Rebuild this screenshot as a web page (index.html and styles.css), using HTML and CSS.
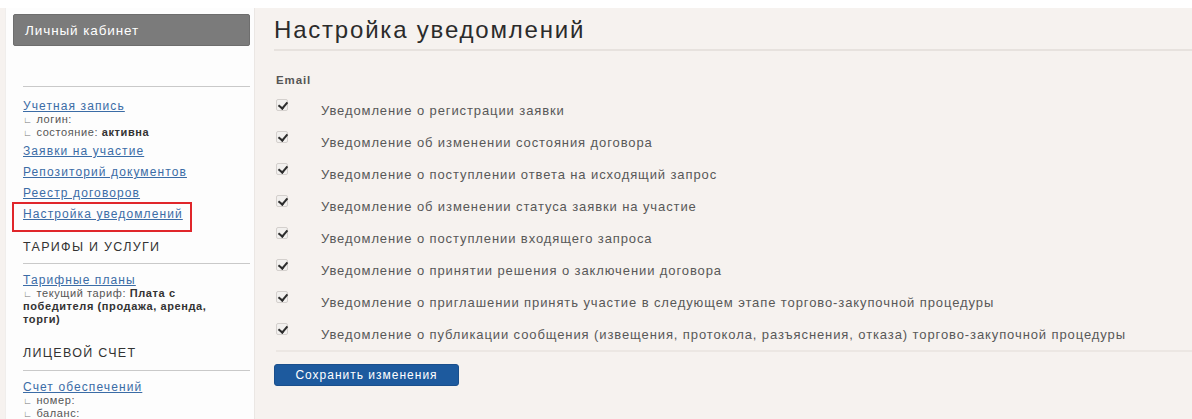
FILE: index.html
```html
<!DOCTYPE html>
<html lang="ru">
<head>
<meta charset="utf-8">
<title>Настройка уведомлений</title>
<link rel="stylesheet" href="styles.css">
</head>
<body>
<div class="page">
  <aside class="sidebar">
    <div class="sidebar-title">Личный кабинет</div>

    <section class="side-block side-block--first">
      <ul class="menu">
        <li>
          <a href="#">Учетная запись</a>
          <ul class="props">
            <li>логин:</li>
            <li>состояние: <b>активна</b></li>
          </ul>
        </li>
        <li><a href="#">Заявки на участие</a></li>
        <li><a href="#">Репозиторий документов</a></li>
        <li><a href="#">Реестр договоров</a></li>
        <li class="marked"><a href="#">Настройка уведомлений</a></li>
      </ul>
    </section>

    <section class="side-block">
      <h3 class="side-heading">Тарифы и услуги</h3>
      <ul class="menu">
        <li>
          <a href="#">Тарифные планы</a>
          <ul class="props">
            <li>текущий тариф: <b>Плата с победителя (продажа, аренда, торги)</b></li>
          </ul>
        </li>
      </ul>
    </section>

    <section class="side-block">
      <h3 class="side-heading">Лицевой счет</h3>
      <ul class="menu">
        <li>
          <a href="#">Счет обеспечений</a>
          <ul class="props">
            <li>номер:</li>
            <li>баланс:</li>
          </ul>
        </li>
      </ul>
    </section>
  </aside>

  <main class="content">
    <h1 class="page-title">Настройка уведомлений</h1>

    <form class="settings">
      <div class="group-label">Email</div>
      <ul class="options">
        <li class="option"><span class="check"></span><span class="option-text">Уведомление о регистрации заявки</span></li>
        <li class="option"><span class="check"></span><span class="option-text">Уведомление об изменении состояния договора</span></li>
        <li class="option"><span class="check"></span><span class="option-text">Уведомление о поступлении ответа на исходящий запрос</span></li>
        <li class="option"><span class="check"></span><span class="option-text">Уведомление об изменении статуса заявки на участие</span></li>
        <li class="option"><span class="check"></span><span class="option-text">Уведомление о поступлении входящего запроса</span></li>
        <li class="option"><span class="check"></span><span class="option-text">Уведомление о принятии решения о заключении договора</span></li>
        <li class="option"><span class="check"></span><span class="option-text">Уведомление о приглашении принять участие в следующем этапе торгово-закупочной процедуры</span></li>
        <li class="option"><span class="check"></span><span class="option-text">Уведомление о публикации сообщения (извещения, протокола, разъяснения, отказа) торгово-закупочной процедуры</span></li>
      </ul>
      <div class="actions">
        <button type="button" class="btn-save">Сохранить изменения</button>
      </div>
    </form>
  </main>
</div>
</body>
</html>
```

FILE: styles.css
```css
* { box-sizing: border-box; }

html, body {
  margin: 0;
  padding: 0;
  background: #ffffff;
  font-family: "Liberation Sans", Arial, sans-serif;
  color: #333;
}

.page {
  margin-top: 8px;
  height: 411px;
  display: flex;
  background: #f6f2ef;
  overflow: hidden;
}

/* ---------- sidebar ---------- */
.sidebar {
  width: 250px;
  margin-left: 5px;
  padding: 6px 4px 0 7px;
  background: #fdfdfd;
  border-left: 1px solid #f0eeec;
  border-right: 1px solid #ebe7e4;
  flex-shrink: 0;
}

.sidebar-title {
  height: 32px;
  padding-left: 11px;
  line-height: 32px;
  background: #7b7b7b;
  border: 1px solid #6e6e6e;
  border-radius: 2px;
  color: #fff;
  font-size: 13.5px;
  letter-spacing: 0.9px;
}

.side-block {
  margin-left: 10px;
}

.side-block--first {
  margin-top: 40px;
  border-top: 1px solid #c9c9c9;
  padding-top: 9px;
}

.side-heading {
  margin: 17px 0 0;
  padding-bottom: 7px;
  border-bottom: 1px solid #c9c9c9;
  line-height: 20px;
  font-size: 12.5px;
  font-weight: normal;
  letter-spacing: 1.3px;
  text-transform: uppercase;
  color: #333;
}

.side-block--first + .side-block .side-heading {
  margin-top: 12px;
  padding-bottom: 6px;
}

.menu {
  list-style: none;
  margin: 0;
  padding: 0;
}

.side-heading + .menu {
  padding-top: 6px;
}

.menu > li {
  line-height: 21px;
  font-size: 12px;
  letter-spacing: 1.1px;
}

.menu a {
  color: #3b6ca6;
  text-decoration: underline;
}

.props {
  list-style: none;
  margin: -4px 0 2px;
  padding: 0;
  width: 216px;
}

.props li {
  font-size: 11px;
  line-height: 13px;
  letter-spacing: 0.6px;
  color: #555;
}

/* tree corner in front of each property line */
.props li::before {
  content: "∟";
  margin-right: 4px;
  font-size: 9px;
  line-height: 0;
  color: #777;
}

.props b {
  color: #333;
}

.marked {
  position: relative;
}

/* red frame drawn over the current menu entry */
.marked::after {
  content: "";
  position: absolute;
  left: -11px;
  top: -2px;
  width: 176px;
  height: 26px;
  border: 2px solid #e0262b;
}

/* ---------- content ---------- */
.content {
  flex: 1;
  padding-left: 19px;
}

.page-title {
  margin: 7px 0 0;
  padding-bottom: 4px;
  line-height: 30px;
  font-size: 24px;
  font-weight: normal;
  letter-spacing: 1.8px;
  color: #2b2b2b;
  border-bottom: 2px solid #e7e2de;
}

.settings {
  padding-left: 2px;
}

.group-label {
  margin-top: 21px;
  line-height: 16px;
  font-size: 11.5px;
  font-weight: bold;
  letter-spacing: 0.9px;
  color: #555;
}

.options {
  list-style: none;
  margin: 6px 0 0;
  padding: 0;
  border-bottom: 2px solid #ece7e3;
}

.option {
  height: 32px;
  display: flex;
  align-items: center;
}

.check {
  width: 12px;
  height: 12px;
  margin: -10px 33px 0 0;
  border: 1px solid #d4d0cd;
  border-radius: 2px;
  background: #f2f0ee;
  position: relative;
  flex-shrink: 0;
}

/* tick mark inside the checked box */
.check::after {
  content: "";
  position: absolute;
  left: 3px;
  top: 0px;
  width: 4px;
  height: 7px;
  border: solid #2d2d2d;
  border-width: 0 2px 2px 0;
  transform: rotate(40deg);
}

.option-text {
  font-size: 13px;
  letter-spacing: 0.9px;
  color: #585858;
}

.actions {
  padding-top: 12px;
}

.btn-save {
  width: 185px;
  height: 22px;
  margin-left: -2px;
  padding: 0;
  border: 1px solid #1a4f8c;
  border-radius: 3px;
  background: #1d5a9e;
  color: #fff;
  font-family: "Liberation Sans", Arial, sans-serif;
  font-size: 12px;
  letter-spacing: 1px;
  cursor: pointer;
}
```
